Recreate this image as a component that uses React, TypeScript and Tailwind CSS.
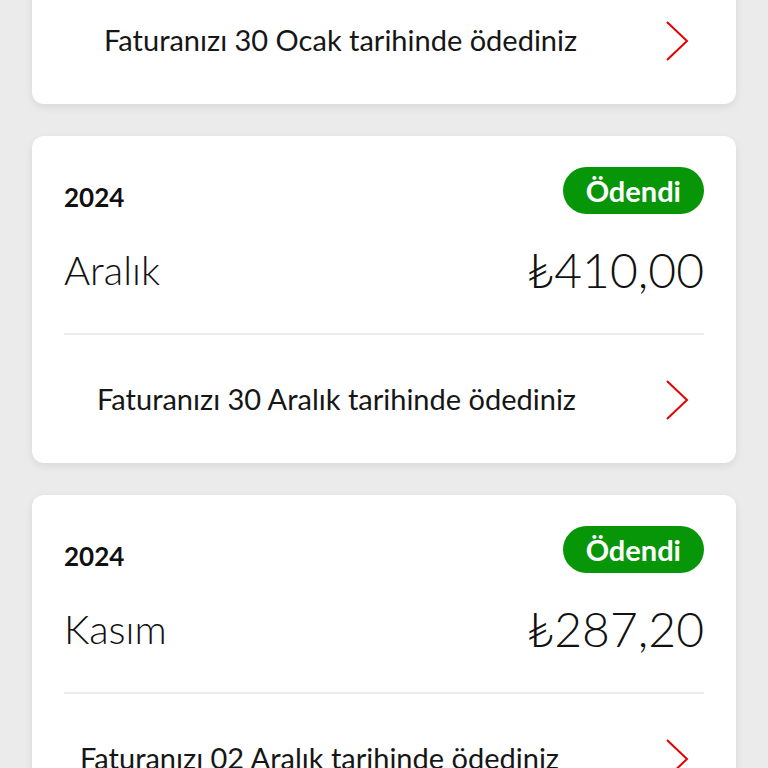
import { useState } from 'react'

type Bill = {
  year: string
  month: string
  amount: string
  note: string
  indent: string
}

const bills: Bill[] = [
  { year: '2025', month: 'Ocak', amount: '₺410,00', note: 'Faturanızı 30 Ocak tarihinde ödediniz', indent: 'pl-[40px]' },
  { year: '2024', month: 'Aralık', amount: '₺410,00', note: 'Faturanızı 30 Aralık tarihinde ödediniz', indent: 'pl-[33px]' },
  { year: '2024', month: 'Kasım', amount: '₺287,20', note: 'Faturanızı 02 Aralık tarihinde ödediniz', indent: 'pl-[16px]' },
]

function Chevron() {
  return (
    <svg width="26" height="42" viewBox="0 0 26 42" fill="none" className="shrink-0">
      <polyline points="3,2 23,21 3,40" stroke="#e60000" strokeWidth="2" strokeLinejoin="miter" />
    </svg>
  )
}

function BillCard({ bill }: { bill: Bill }) {
  return (
    <div className="bg-white rounded-xl shadow-[0_3px_8px_rgba(0,0,0,0.08)] px-8">
      {/* Header */}
      <div className="pt-[31px] flex items-end justify-between">
        <span className="text-[26px] font-bold text-[#111] leading-none mb-[4px]">{bill.year}</span>
        <span className="h-[47px] px-[23px] rounded-full bg-[#079607] text-white text-[29px] font-bold flex items-center leading-none">
          Ödendi
        </span>
      </div>

      {/* Month + amount */}
      <div className="mt-[28px] h-[56px] flex items-center justify-between text-[#111]">
        <span className="text-[40px] font-light leading-none">{bill.month}</span>
        <span className="text-[48px] font-light leading-none">{bill.amount}</span>
      </div>

      <div className="mt-[35px] h-[2px] bg-[#ebebeb]" />

      {/* Payment note */}
      <div className="h-[128px] flex items-center justify-between">
        <span className={`text-[29px] text-[#161616] ${bill.indent}`}>{bill.note}</span>
        <div className="mr-[14px] mt-[2px]">
          <Chevron />
        </div>
      </div>
    </div>
  )
}

export default function App() {
  const [items] = useState(bills)

  return (
    <div
      className="min-h-screen bg-[#ebebeb] overflow-hidden"
      style={{ fontFamily: 'Lato, "Noto Sans", sans-serif' }}
    >
      <div className="mt-[-223px] px-8 flex flex-col gap-8">
        {items.map((bill, i) => (
          <BillCard key={i} bill={bill} />
        ))}
      </div>
    </div>
  )
}
